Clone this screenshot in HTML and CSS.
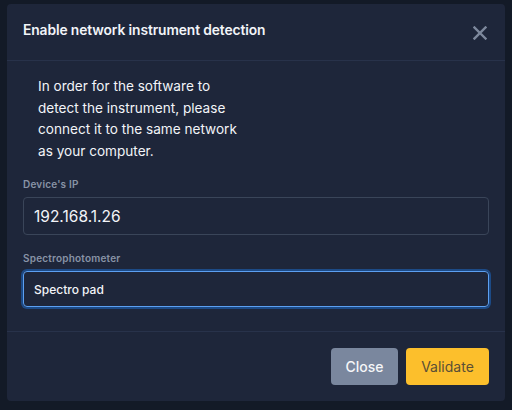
FILE: index.html
```html
<!DOCTYPE html>
<html>
<head>
<meta charset="utf-8">
<link rel="stylesheet" href="styles.css">
</head>
<body>
<div class="modal">
  <div class="modal-header">
    <h1 class="title">Enable network instrument detection</h1>
    <button class="close-x" aria-label="Close">
      <svg width="14" height="14" viewBox="0 0 14 14"><path d="M1.5 1.5 L12.5 12.5 M12.5 1.5 L1.5 12.5" stroke="#7d889c" stroke-width="2.4" stroke-linecap="square"/></svg>
    </button>
  </div>
  <div class="modal-body">
    <p class="intro">In order for the software to<br>detect the instrument, please<br>connect it to the same network<br>as your computer.</p>
    <div class="field">
      <label class="label">Device's IP</label>
      <div class="input">192.168.1.26</div>
    </div>
    <div class="field">
      <label class="label">Spectrophotometer</label>
      <div class="input input-focus">Spectro pad</div>
    </div>
  </div>
  <div class="modal-footer">
    <button class="btn btn-close">Close</button>
    <button class="btn btn-validate">Validate</button>
  </div>
</div>
</body>
</html>
```
FILE: styles.css
```css
* { box-sizing: border-box; }
html, body { margin: 0; padding: 0; }
body {
  background: #131a27;
  width: 512px;
  height: 410px;
  padding: 4px 7px 0 7px;
  font-family: "Inter", "Roboto", sans-serif;
  overflow: hidden;
}
.modal {
  width: 498px;
  height: 397px;
  background: #1e263a;
  border-radius: 4px;
  display: flex;
  flex-direction: column;
}
.modal-header {
  height: 57px;
  border-bottom: 1px solid #28324a;
  display: flex;
  align-items: flex-start;
  justify-content: space-between;
  padding: 17px 18px 0 16px;
}
.title {
  margin: 0;
  font-size: 13.8px;
  font-weight: 600;
  color: #f2f4f8;
  line-height: 18px;
  letter-spacing: -0.1px;
}
.close-x {
  background: none;
  border: none;
  padding: 0;
  margin-top: 5px;
  width: 14px;
  height: 14px;
  display: flex;
}
.modal-body {
  flex: 1;
  padding: 15px 16px 0 16px;
  border-bottom: 1px solid #28324a;
}
.intro {
  margin: 0 0 16px 15px;
  font-size: 13.6px;
  line-height: 21.5px;
  color: #f2f4f8;
}
.field { margin-bottom: 17px; }
.label {
  display: block;
  font-size: 10px;
  font-weight: 600;
  color: #8893a6;
  margin-bottom: 7px;
  letter-spacing: 0.2px;
}
.input {
  height: 38px;
  border: 1px solid #3a4559;
  border-radius: 4px;
  padding: 0 10px;
  display: flex;
  align-items: center;
  font-size: 15.5px;
  color: #f2f4f8;
}
.input-focus {
  height: 36px;
  border: 1.5px solid #5c9ff0;
  box-shadow: 0 0 0 2px #1c4a86;
  font-size: 12px;
  font-weight: 500;
}
.modal-footer {
  height: 69px;
  display: flex;
  justify-content: flex-end;
  align-items: flex-start;
  gap: 8px;
  padding: 16px 16px 0 0;
}
.btn {
  height: 37px;
  border: none;
  border-radius: 4px;
  font-family: "Inter", "Roboto", sans-serif;
  font-size: 14px;
  padding: 0;
}
.btn-close {
  width: 67px;
  background: #7a879e;
  color: #f5f6f8;
  font-weight: 500;
}
.btn-validate {
  width: 83px;
  background: #fcbf2c;
  color: #5a4f36;
}
```
